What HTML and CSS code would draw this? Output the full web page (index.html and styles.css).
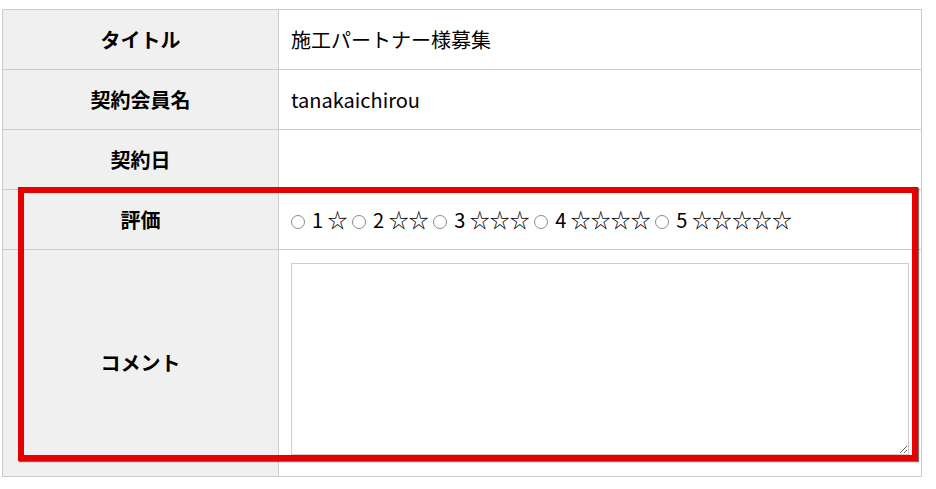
FILE: index.html
```html
<!DOCTYPE html>
<html lang="ja">
<head>
<meta charset="utf-8">
<link rel="stylesheet" href="styles.css">
</head>
<body>
<div class="page">
  <table class="form">
    <tr>
      <th>タイトル</th>
      <td>施工パートナー様募集</td>
    </tr>
    <tr>
      <th>契約会員名</th>
      <td>tanakaichirou</td>
    </tr>
    <tr>
      <th>契約日</th>
      <td></td>
    </tr>
    <tr>
      <th>評価</th>
      <td class="rating">
        <label><input type="radio" name="r">1 <span class="stars">☆</span></label>
        <label><input type="radio" name="r">2 <span class="stars">☆☆</span></label>
        <label><input type="radio" name="r">3 <span class="stars">☆☆☆</span></label>
        <label><input type="radio" name="r">4 <span class="stars">☆☆☆☆</span></label>
        <label><input type="radio" name="r">5 <span class="stars">☆☆☆☆☆</span></label>
      </td>
    </tr>
    <tr class="comment-row">
      <th>コメント</th>
      <td class="comment"><textarea></textarea></td>
    </tr>
  </table>
  <div class="highlight"></div>
</div>
</body>
</html>
```

FILE: styles.css
```css
html, body {
  margin: 0;
  padding: 0;
  background: #ffffff;
}

body {
  font-family: "Noto Sans CJK JP", "Noto Sans", sans-serif;
  font-size: 20px;
  color: #000;
}

.page {
  position: relative;
  padding: 9px 0 0 2px;
}

.form {
  border-collapse: collapse;
  width: 920px;
  table-layout: fixed;
}

.form th,
.form td {
  border: 1px solid #cccccc;
  height: 59px;
  padding: 0 12px;
  line-height: 30px;
}

.form th {
  width: 251px;
  background: #f0f0f0;
  font-weight: bold;
  text-align: center;
}

.form td {
  text-align: left;
}

.rating label {
  white-space: nowrap;
}

.rating .stars {
  font-family: "Noto Sans CJK JP", sans-serif;
  display: inline-block;
}

.rating input {
  -webkit-appearance: none;
  appearance: none;
  display: inline-block;
  box-sizing: border-box;
  margin: 0 7px 0 0;
  width: 14px;
  height: 14px;
  border: 1px solid #8a8a8a;
  border-radius: 50%;
  background: #fff;
  vertical-align: -1px;
}

.form .comment-row th,
.form .comment-row td {
  height: 213px;
}

.form .comment-row th {
  height: 226px;
}

.form .comment {
  padding: 13px 12px 0 12px;
  vertical-align: top;
}

.comment textarea {
  display: block;
  box-sizing: border-box;
  width: 618px;
  height: 192px;
  border: 1px solid #cccccc;
  margin: 0;
  font-family: inherit;
}

.highlight {
  position: absolute;
  left: 18px;
  top: 187px;
  width: 888px;
  height: 262px;
  border: 6px solid #e60000;
  box-shadow: 1px 1px 1px rgba(0, 0, 0, 0.55);
  pointer-events: none;
}
```
